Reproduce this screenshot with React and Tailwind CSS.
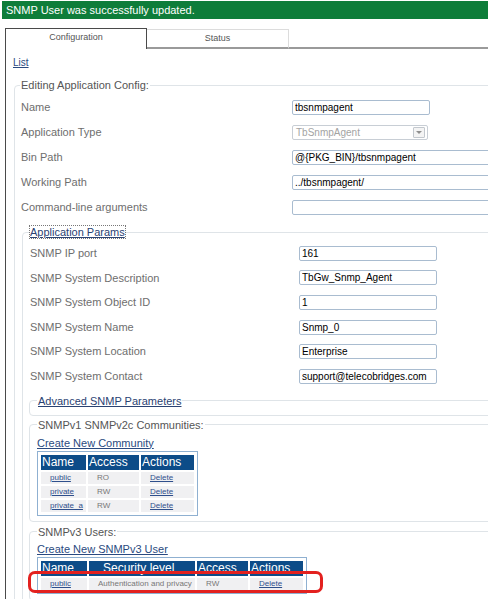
import React from 'react';

const TextInput = ({ value, className = 'w-[138px]' }) => (
    <input
        type="text"
        readOnly
        defaultValue={value}
        className={`${className} h-[15px] border border-[#a9bcd0] rounded-[2px] bg-white px-[2px] text-[10px] leading-[13px] text-black outline-none`}
    />
);

const configRows = [
    { label: 'Name', value: 'tbsnmpagent', w: 'w-[138px]' },
    { label: 'Application Type', select: 'TbSnmpAgent' },
    { label: 'Bin Path', value: '@{PKG_BIN}/tbsnmpagent', w: 'w-[230px]' },
    { label: 'Working Path', value: '../tbsnmpagent/', w: 'w-[230px]' },
    { label: 'Command-line arguments', value: '', w: 'w-[230px]' },
];

const paramRows = [
    { label: 'SNMP IP port', value: '161' },
    { label: 'SNMP System Description', value: 'TbGw_Snmp_Agent' },
    { label: 'SNMP System Object ID', value: '1' },
    { label: 'SNMP System Name', value: 'Snmp_0' },
    { label: 'SNMP System Location', value: 'Enterprise' },
    { label: 'SNMP System Contact', value: 'support@telecobridges.com' },
];

const communities = [
    { name: 'public', access: 'RO' },
    { name: 'private', access: 'RW' },
    { name: 'private_a', access: 'RW' },
];

const DataTable = ({ cols, rows }) => (
    <div className="w-fit border border-[#8fb0d1] p-[1px] bg-white">
        <table className="border-separate border-spacing-[2px]">
            <thead>
                <tr>
                    {cols.map((c) => (
                        <th
                            key={c.title}
                            className={`${c.w} ${c.pad} h-[15px] p-0 bg-[#0d4c88] text-white text-[12px] leading-[15px] font-normal text-left whitespace-nowrap`}
                        >
                            {c.title}
                        </th>
                    ))}
                </tr>
            </thead>
            <tbody>
                {rows.map((r, i) => (
                    <tr key={i}>
                        {r.map((cell, j) => (
                            <td key={j} className="h-[12px] p-0 pl-[9px] bg-[#f0f0f2] text-[8px] leading-[12px] text-[#777] whitespace-nowrap">
                                {cell.link ? (
                                    <a href="#" className="text-[#2f4f8c] underline">{cell.text}</a>
                                ) : (
                                    cell.text
                                )}
                            </td>
                        ))}
                    </tr>
                ))}
            </tbody>
        </table>
    </div>
);

const App = () => {
    return (
        <div className="relative w-[488px] h-[599px] overflow-hidden bg-white font-['Liberation_Sans',Arial,sans-serif]">
            {/* Success banner */}
            <div className="mt-[1px] ml-[2px] h-[18px] bg-[#0e7d3a] pl-[4px] text-white text-[11px] leading-[18px]">
                SNMP User was successfully updated.
            </div>

            {/* Panel */}
            <div className="mt-[9px] ml-[5px] w-[560px] border-l border-[#4a4a4a]">
                {/* Tabs */}
                <div className="flex h-[21px]">
                    <div className="w-[141px] border-t border-r border-[#4a4a4a] text-center text-[9px] leading-[17px] text-[#555]">
                        Configuration
                    </div>
                    <div className="w-[142px] mt-[1px] border-t border-r border-[#dcdcdc] border-b-2 border-b-[#9a9a9a] text-center text-[9px] leading-[16px] text-[#555]">
                        Status
                    </div>
                    <div className="flex-1 border-b-2 border-[#9a9a9a]" />
                </div>

                <div className="pl-[7px]">
                    <a href="#" className="block mt-[7px] text-[10px] leading-[14px] text-[#2a4a80] underline">List</a>

                    {/* Editing Application Config */}
                    <fieldset className="mt-[8px] ml-[1px] border border-[#dfe4e8] rounded-[4px] pb-[10px]">
                        <legend className="ml-[5px] px-[1px] text-[11px] leading-[14px] text-[#555]">Editing Application Config:</legend>
                        <div className="pt-[3px] pl-[6px]">
                            {configRows.map((row) => (
                                <div key={row.label} className="flex items-center h-[25px]">
                                    <span className="w-[271px] text-[11px] text-[#6e6e6e]">{row.label}</span>
                                    {row.select ? (
                                        <div className="w-[136px] h-[15px] border border-[#c8ced5] rounded-[2px] bg-white flex items-center justify-between pl-[3px] pr-[2px] text-[10px] text-[#a3a3a3]">
                                            {row.select}
                                            <span className="w-[12px] h-[11px] border border-[#c3c8ce] rounded-[1px] bg-[#f4f4f4] flex items-center justify-center">
                                                <span className="border-x-[3px] border-x-transparent border-t-[3px] border-t-[#8f8f8f]" />
                                            </span>
                                        </div>
                                    ) : (
                                        <TextInput value={row.value} className={row.w} />
                                    )}
                                </div>
                            ))}

                            {/* Application Params */}
                            <fieldset className="mt-[5px] ml-[1px] border border-[#dfe4e8] rounded-[4px] pb-[10px]">
                                <legend className="ml-[6px] px-[1px] text-[11px] leading-[14px]">
                                    <a href="#" className="text-[#2a4272] underline outline-1 outline-dotted outline-[#777]">Application Params</a>
                                </legend>
                                <div className="pt-[2px] pl-[7px]">
                                    {paramRows.map((row) => (
                                        <div key={row.label} className="flex items-center h-[24.6px]">
                                            <span className="w-[269px] text-[11px] text-[#6e6e6e]">{row.label}</span>
                                            <TextInput value={row.value} />
                                        </div>
                                    ))}

                                    {/* Advanced SNMP Parameters */}
                                    <fieldset className="mt-[5px] -ml-px border border-[#dfe4e8] rounded-[4px] pb-[7px]">
                                        <legend className="ml-[7px] px-[1px] text-[11px] leading-[14px]">
                                            <a href="#" className="text-[#2a4272] underline">Advanced SNMP Parameters</a>
                                        </legend>
                                    </fieldset>

                                    {/* Communities */}
                                    <fieldset className="mt-[2px] -ml-px border border-[#dfe4e8] rounded-[4px] pb-[5px]">
                                        <legend className="ml-[7px] px-[1px] text-[11px] leading-[14px] text-[#555]">SNMPv1 SNMPv2c Communities:</legend>
                                        <div className="pl-[7px]">
                                            <a href="#" className="block mt-[4px] text-[11px] leading-[14px] text-[#2a4a80] underline">Create New Community</a>
                                            <div className="mt-[1px]">
                                                <DataTable
                                                    cols={[
                                                        { title: 'Name', w: 'w-[45px]', pad: 'pl-[1px]' },
                                                        { title: 'Access', w: 'w-[51px]', pad: 'pl-[1px]' },
                                                        { title: 'Actions', w: 'w-[53px]', pad: 'pl-[1px]' },
                                                    ]}
                                                    rows={communities.map((c) => [
                                                        { text: c.name, link: true },
                                                        { text: c.access },
                                                        { text: 'Delete', link: true },
                                                    ])}
                                                />
                                            </div>
                                        </div>
                                    </fieldset>

                                    {/* SNMPv3 users */}
                                    <fieldset className="mt-[3px] -ml-px border border-[#dfe4e8] rounded-[4px] pb-[6px]">
                                        <legend className="ml-[7px] px-[1px] text-[11px] leading-[14px] text-[#555]">SNMPv3 Users:</legend>
                                        <div className="pl-[7px]">
                                            <a href="#" className="block mt-[3px] text-[11px] leading-[14px] text-[#2a4a80] underline">Create New SNMPv3 User</a>
                                            <div className="mt-[1px]">
                                                <DataTable
                                                    cols={[
                                                        { title: 'Name', w: 'w-[46px]', pad: 'pl-[1px]' },
                                                        { title: 'Security level', w: 'w-[106px]', pad: 'pl-[14px]' },
                                                        { title: 'Access', w: 'w-[51px]', pad: 'pl-[1px]' },
                                                        { title: 'Actions', w: 'w-[53px]', pad: 'pl-[1px]' },
                                                    ]}
                                                    rows={[[
                                                        { text: 'public', link: true },
                                                        { text: 'Authentication and privacy' },
                                                        { text: 'RW' },
                                                        { text: 'Delete', link: true },
                                                    ]]}
                                                />
                                            </div>
                                        </div>
                                    </fieldset>
                                </div>
                            </fieldset>
                        </div>
                    </fieldset>
                </div>
            </div>

            {/* Red highlight drawn over the SNMPv3 user row */}
            <div className="absolute left-[28px] top-[571px] w-[295px] h-[22px] border-[3px] border-[#e3211f] rounded-[7px] pointer-events-none" />
        </div>
    );
};

export default App;
